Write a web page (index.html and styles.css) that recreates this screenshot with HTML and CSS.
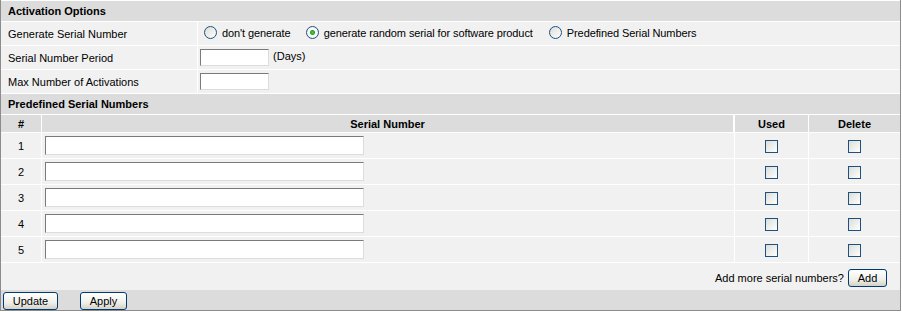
FILE: index.html
```html
<!DOCTYPE html>
<html lang="en">
<head>
  <meta charset="UTF-8">
  <title>Activation Options</title>
  <link rel="stylesheet" href="styles.css">
</head>
<body>
  <div class="panel">
    <table class="grid options">
      <tr>
        <th colspan="2" class="section">Activation Options</th>
      </tr>
      <tr>
        <td class="label">Generate Serial Number</td>
        <td class="value">
          <label class="choice"><input type="radio" name="gen"> don't generate</label>
          <label class="choice"><input type="radio" name="gen" checked> generate random serial for software product</label>
          <label class="choice"><input type="radio" name="gen"> Predefined Serial Numbers</label>
        </td>
      </tr>
      <tr>
        <td class="label">Serial Number Period</td>
        <td class="value"><input type="text" class="short"> (Days)</td>
      </tr>
      <tr>
        <td class="label">Max Number of Activations</td>
        <td class="value"><input type="text" class="short"></td>
      </tr>
      <tr>
        <th colspan="2" class="section">Predefined Serial Numbers</th>
      </tr>
    </table>

    <table class="grid serials">
      <tr class="head">
        <th class="num">#</th>
        <th>Serial Number</th>
        <th class="used">Used</th>
        <th class="del">Delete</th>
      </tr>
      <tr>
        <td class="num">1</td>
        <td><input type="text" class="serial"></td>
        <td class="center"><input type="checkbox"></td>
        <td class="center"><input type="checkbox"></td>
      </tr>
      <tr>
        <td class="num">2</td>
        <td><input type="text" class="serial"></td>
        <td class="center"><input type="checkbox"></td>
        <td class="center"><input type="checkbox"></td>
      </tr>
      <tr>
        <td class="num">3</td>
        <td><input type="text" class="serial"></td>
        <td class="center"><input type="checkbox"></td>
        <td class="center"><input type="checkbox"></td>
      </tr>
      <tr>
        <td class="num">4</td>
        <td><input type="text" class="serial"></td>
        <td class="center"><input type="checkbox"></td>
        <td class="center"><input type="checkbox"></td>
      </tr>
      <tr>
        <td class="num">5</td>
        <td><input type="text" class="serial"></td>
        <td class="center"><input type="checkbox"></td>
        <td class="center"><input type="checkbox"></td>
      </tr>
      <tr>
        <td colspan="4" class="more">
          <div class="more-inner">Add more serial numbers? <button class="btn add">Add</button></div>
        </td>
      </tr>
    </table>

    <div class="footer">
      <button class="btn update">Update</button>
      <button class="btn apply">Apply</button>
    </div>
  </div>
</body>
</html>
```

FILE: styles.css
```css
body {
  margin: 0;
  font-family: 'Liberation Sans', Arial, sans-serif;
  font-size: 11px;
  color: #000;
  background: #fff;
}

.panel {
  width: 899px;
  border-left: 1px solid #8c8c8c;
  border-right: 1px solid #8c8c8c;
  border-bottom: 1px solid #8c8c8c;
  padding-top: 1px;
}

.grid {
  width: 100%;
  border-collapse: separate;
  border-spacing: 0;
}

.grid td,
.grid th {
  background-color: #f1f1f1;
  padding: 0;
  border-bottom: 1px solid #fff;
}

.grid th {
  background-color: #dcdcdc;
  font-weight: bold;
}

.section {
  text-align: left;
  padding-left: 7px !important;
}

/* options */
.options .section {
  height: 20px;
}

.options .label {
  width: 189px;
  height: 23px;
  padding-left: 7px;
  border-right: 1px solid #fff;
}

.options .value {
  padding-left: 2px;
}

.choice {
  display: inline-flex;
  align-items: center;
  margin-left: 4px;
  margin-right: 7px;
  letter-spacing: -0.1px;
}

.choice:nth-child(2) {
  margin-left: 5px;
}

.choice:nth-child(3) {
  margin-left: 6px;
}

input[type="radio"] {
  appearance: none;
  width: 13px;
  height: 13px;
  margin: 0 5px 0 0;
  border: 1px solid #1c5180;
  border-radius: 50%;
  background: linear-gradient(135deg, #dcdcd7, #ffffff);
}

input[type="radio"]:checked {
  background: radial-gradient(circle, #55d151 0, #21a121 2px, #ffffff 3px, #e8e8e4 100%);
}

input[type="text"] {
  height: 17px;
  box-sizing: border-box;
  border: 1px solid;
  border-color: #7a7a7a #dcdcdc #dcdcdc #7a7a7a;
  background: #fff;
  margin: 0;
  padding: 0 2px;
  font-family: inherit;
  font-size: 11px;
  vertical-align: middle;
}

.short {
  width: 69px;
  margin-right: 1px !important;
}

/* serial numbers */
.serials .head th {
  height: 17px;
  text-align: center;
}

.serials .num {
  width: 40px;
  text-align: center;
  border-right: 1px solid #fff;
}

.serials td {
  height: 25px;
}

.serials .used {
  width: 73px;
  border-left: 1px solid #fff;
}

.serials .del {
  width: 91px;
  border-left: 1px solid #fff;
}

.serials th:nth-child(2) {
  border-right: 1px solid #fff;
}

.serials td:nth-child(3) {
  border-left: 1px solid #fff;
}

.serials td:nth-child(4) {
  border-left: 1px solid #fff;
}

.serials td:nth-child(2) {
  padding-left: 3px;
}

.serial {
  width: 319px;
  height: 19px !important;
}

.center {
  text-align: center;
}

input[type="checkbox"] {
  appearance: none;
  width: 13px;
  height: 13px;
  margin: 1px 0 0;
  vertical-align: middle;
  border: 1px solid #1c5180;
  background: linear-gradient(135deg, #dcdcd7, #ffffff);
}

.serials .more {
  height: 27px;
  border-bottom: 0;
  padding-right: 13px;
}

.more-inner {
  display: flex;
  justify-content: flex-end;
  align-items: center;
  gap: 4px;
  padding-top: 2px;
}

/* buttons */
.btn {
  font-family: inherit;
  font-size: 11px;
  height: 18px;
  padding: 0;
  border: 1px solid #003c74;
  border-radius: 3px;
  background: linear-gradient(#ffffff, #f0f0ea 60%, #d6d0c5);
  color: #000;
}

.add {
  width: 39px;
}

.footer {
  background: #dcdcdc;
  height: 20px;
  display: flex;
  align-items: flex-end;
  gap: 22px;
  padding-left: 2px;
}

.update {
  width: 55px;
}

.apply {
  width: 47px;
}
```
